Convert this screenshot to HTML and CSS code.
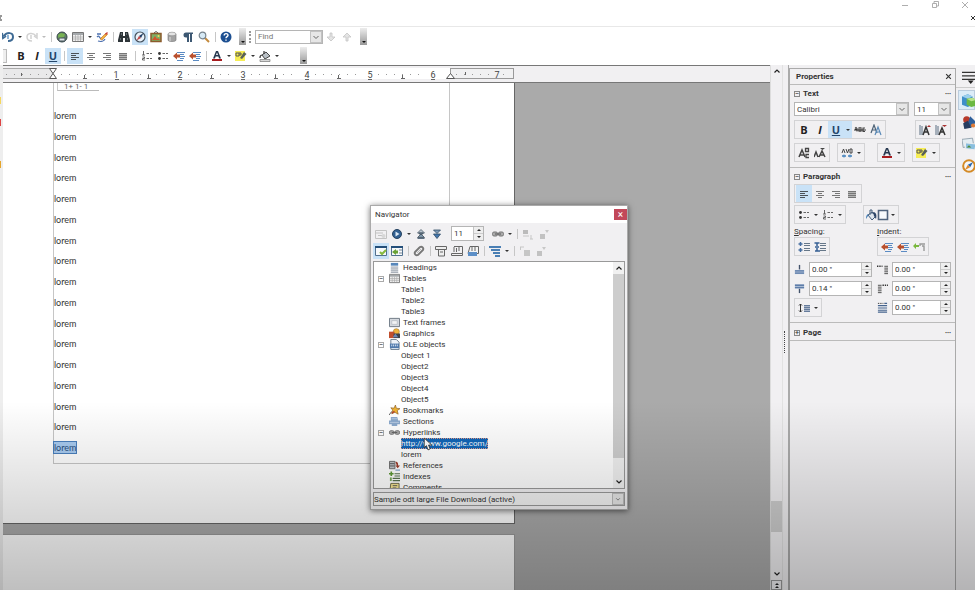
FILE: index.html
```html
<!DOCTYPE html>
<html lang="en">
<head>
<meta charset="utf-8">
<title>Writer</title>
<link rel="stylesheet" href="styles.css">
</head>
<body>
<svg class="defs" aria-hidden="true">
  <symbol id="undo" viewBox="0 0 12 12"><path d="M0 2l1 5 3-2M2 5c3-4 9-4 9 1 0 3-2 4-5 4" fill="none" stroke="#3e6a94" stroke-width="2"/><path d="M6 4v4" stroke="#8fb4d6" stroke-width="2"/></symbol>
  <symbol id="redo" viewBox="0 0 12 12"><path d="M11 2v5L8 5M10 5C7 1 1 2 1 6c0 3 2 4 5 4M5 4v4" fill="none" stroke="#d2d2d2" stroke-width="1.500"/></symbol>
  <symbol id="globe" viewBox="0 0 12 12"><circle cx="6" cy="6" r="5" fill="#5f7f66" stroke="#38464c"/><path d="M2 4l3-2 4 1-1 3-3 1-2 2z" fill="#79b354"/><path d="M3 7h6v3H3z" fill="#dfe5e8" stroke="#46555c"/></symbol>
  <symbol id="table" viewBox="0 0 12 12"><path d="M.5 1.500h11v9H.5z" fill="#eee" stroke="#777"/><path d="M1 2h10v2H1z" fill="#a5a9ac"/><path d="M3.500 4v6M6 4v6M8.500 4v6M1 6h10M1 8h10" stroke="#a9a9a9" stroke-width=".7"/></symbol>
  <symbol id="pen" viewBox="0 0 12 12"><path d="M1 3h4M1 6c3-3 2 3 5 1M2 10c3 1 6 0 7-2" fill="none" stroke="#4e72b1" stroke-width="1.300"/><path d="M4 8l6-6 1.500 1.500L6 9z" fill="#f3b23f" stroke="#b8702b" stroke-width=".6"/><path d="M9 3l2-2 1 1-2 2z" fill="#c73b3b"/></symbol>
  <symbol id="binoc" viewBox="0 0 12 12"><path d="M2 1h3v4h2V1h3l2 8v2H7V7H5v4H0V9z" fill="#2d3438"/><path d="M2 8h1M9 8h1M3 3h1M8 3h1" stroke="#98a2a8"/></symbol>
  <symbol id="compass" viewBox="0 0 12 12"><circle cx="6" cy="6" r="5" fill="#e9f2fa" stroke="#45525e" stroke-width="1.200"/><path d="M9.500 2L7 7 5 5z" fill="#1d3d66"/><path d="M2.500 9.500L5 5l2 2z" fill="#c14343"/></symbol>
  <symbol id="gallery" viewBox="0 0 12 12"><path d="M4 2l2-1.500L8 2" fill="none" stroke="#555"/><path d="M1 2.500h10v8H1z" fill="#7fae65" stroke="#8c5b2c" stroke-width="1.500"/><path d="M2 9l3-4 2 3 1-1 2 2z" fill="#d4542d"/><circle cx="8.500" cy="5" r="1" fill="#f5dc5c"/></symbol>
  <symbol id="db" viewBox="0 0 12 12"><path d="M2 3v6c0 2 8 2 8 0V3z" fill="#a3a3a3" stroke="#707070" stroke-width=".6"/><ellipse cx="6" cy="3" rx="4" ry="1.800" fill="#e4e4e4" stroke="#888" stroke-width=".6"/><path d="M4 6v4" stroke="#ddd"/></symbol>
  <symbol id="pilcrow" viewBox="0 0 12 12"><path d="M11 1.500H4a2.500 2.500 0 000 5h1V11h2V3h1v8h2V3h1z" fill="#3d5873"/></symbol>
  <symbol id="lens" viewBox="0 0 12 12"><path d="M7 7l4 4" stroke="#c48a3c" stroke-width="2"/><circle cx="4.500" cy="4.500" r="3.300" fill="#d6e9f5" stroke="#77838d" stroke-width="1.200"/></symbol>
  <symbol id="help" viewBox="0 0 12 12"><circle cx="6" cy="6" r="5.500" fill="#1c4f91"/><path d="M4.200 4.500c0-2.500 3.800-2.500 3.800-.3C8 5.500 6 5.700 6 7.200M6 8.500v1.300" fill="none" stroke="#fff" stroke-width="1.400"/></symbol>
  <symbol id="down" viewBox="0 0 12 12"><path d="M5 2h2v4h3l-4 4-4-4h3z" fill="#e4e4e4" stroke="#c4c4c4" stroke-width=".8"/></symbol>
  <symbol id="up" viewBox="0 0 12 12"><path d="M5 10h2V6h3L6 2 2 6h3z" fill="#e4e4e4" stroke="#c4c4c4" stroke-width=".8"/></symbol>
  <symbol id="left" viewBox="0 0 12 12"><path d="M2 3.500h8M2 5.500h5M2 7.500h8M2 9.500h5" stroke="#4c5258"/></symbol>
  <symbol id="center" viewBox="0 0 12 12"><path d="M2 3.500h8M4 5.500h4M2 7.500h8M4 9.500h4" stroke="#777"/></symbol>
  <symbol id="right" viewBox="0 0 12 12"><path d="M2 3.500h8M5 5.500h5M2 7.500h8M5 9.500h5" stroke="#777"/></symbol>
  <symbol id="just" viewBox="0 0 12 12"><path d="M2 3h8v7H2z" fill="#b5b5b5"/><path d="M2 3.500h8M2 5.500h8M2 7.500h8M2 9.500h8" stroke="#777"/></symbol>
  <symbol id="numlist" viewBox="0 0 12 12"><path d="M2.500 1v4M1 5h3M1.500 7h2v1.500h-2V10h2.500" fill="none" stroke="#555" stroke-width=".9"/><path d="M5.500 3.500H8M9 3.500h2M5.500 8.500H8M9 8.500h2" stroke="#666"/></symbol>
  <symbol id="bullist" viewBox="0 0 12 12"><circle cx="2.500" cy="3.500" r="1.400" fill="#333"/><circle cx="2.500" cy="8.500" r="1.400" fill="#333"/><path d="M5.500 3.500H8M9 3.500h2M5.500 8.500H8M9 8.500h2" stroke="#666"/></symbol>
  <symbol id="indent" viewBox="0 0 12 12"><path d="M4 2.500h8M7 4.500h4M7 6.500h5M7 8.500h4M4 10.500h6" stroke="#5b8bc3"/><path d="M0 6l4-3.500v2h3v3H4v2z" fill="#b9502e"/></symbol>
  <symbol id="before" viewBox="0 0 12 12"><path d="M12 3H7v2M9 5h2v5" fill="none" stroke="#999" stroke-width="1.400"/><path d="M0 5l3-3v2h3v2H3v2z" fill="#7ab83e"/></symbol>
  <symbol id="fontcol" viewBox="0 0 12 12"><path d="M2 8.500L5 1h2l3 7.500H8L7.400 6.500H4.600L4 8.500zM5 5h2L6 2.500z" fill="#27384f"/><path d="M1 9h10v2H1z" fill="#a81c20"/></symbol>
  <symbol id="hilite" viewBox="0 0 12 12"><path d="M0 1h10v10H0z" fill="#f6ed55"/><path d="M1 3h3v3H1zM5 2v4M5 4h2" fill="none" stroke="#555"/><path d="M5 8l4-6 2.500 2L7 9z" fill="#59615a"/></symbol>
  <symbol id="bucket" viewBox="0 0 12 12"><path d="M3 5l4-3 4 4-5 3z" fill="#b9c0c6" stroke="#444"/><path d="M5 4V1M3 5C1 5 1 7 1 8" fill="none" stroke="#333" stroke-width="1.200"/><path d="M1 9.500h10v2H1z" fill="#d8d8d8" stroke="#777" stroke-width=".7"/></symbol>
  <symbol id="fill" viewBox="0 0 12 12"><path d="M3 6l4-3 4 4-4 4z" fill="#dfe6ee" stroke="#445e7d"/><path d="M5 6V1h2v4" fill="none" stroke="#445e7d"/><path d="M8 3c3 0 4 3 3 7L9 7z" fill="#2e4668"/><path d="M3 5C1 6 1 8 1 10l2-3z" fill="#4a80b7"/></symbol>
  <symbol id="strike" viewBox="0 0 12 12"><path d="M1 4.500l1-1 1 1v3M1 5.500h2M5 3.800v3.500h2V3.800zM11 4H9v3.500h2" fill="none" stroke="#444" stroke-width="1.100"/><path d="M0 6h12" stroke="#222" stroke-width=".9"/></symbol>
  <symbol id="shadow" viewBox="0 0 12 12"><path d="M1 9l3-8 3 8M2 6h4" fill="none" stroke="#4d6276" stroke-width="1.200"/><path d="M5 11l3-8 3 8M6 8h4" fill="none" stroke="#5b8bb9" stroke-width="1.200"/></symbol>
  <symbol id="grow" viewBox="0 0 12 12"><path d="M1 1v10M3 2v9" stroke="#5a6f82"/><path d="M4 11l3-8 3 8M5 8h4" fill="none" stroke="#333" stroke-width="1.500"/><path d="M8 3l2-2 2 2z" fill="#a93232"/></symbol>
  <symbol id="shrink" viewBox="0 0 12 12"><path d="M1 1v10M3 2v9" stroke="#5a6f82"/><path d="M4 11l3-7 3 7M5 8h4" fill="none" stroke="#333" stroke-width="1.500"/><path d="M7 1h5l-2.500 2z" fill="#a93232"/></symbol>
  <symbol id="super" viewBox="0 0 12 12"><path d="M1 10l3-7 3 7M2 8h4" fill="none" stroke="#444" stroke-width="1.500"/><path d="M7.500 1.500h3v3h-3zM11 7.500H8v3h3" fill="none" stroke="#444" stroke-width="1.300"/></symbol>
  <symbol id="sub" viewBox="0 0 12 12"><path d="M0 10l2-5 2 5M5 10l3-6 3 6M6 8h4" fill="none" stroke="#444" stroke-width="1.500"/><path d="M6 1h5L8.500 3z" fill="#444"/></symbol>
  <symbol id="charsp" viewBox="0 0 12 12"><path d="M1 6l1.500-4L4 6M5 2l1.500 4L8 2M9 2v4h2V2z" fill="none" stroke="#444"/><path d="M1 9h4M7 9h4" stroke="#4683bd" stroke-width="1.500"/><path d="M3 7.500v3M9 7.500v3" stroke="#4683bd"/></symbol>
  <symbol id="frame" viewBox="0 0 12 12"><path d="M1.500 1.500h9v9h-9z" fill="#f8fafd" stroke="#51647e" stroke-width="1.600"/></symbol>
  <symbol id="parainc" viewBox="0 0 12 12"><path d="M2.500 1v4M.5 3h4M2.500 7v4M.5 9h4" stroke="#456da0" stroke-width="1.500"/><path d="M6 2.500h6M6 4.500h6M6 7.500h6M6 9.500h6" stroke="#667789"/></symbol>
  <symbol id="paradec" viewBox="0 0 12 12"><path d="M.5 2h5M3 2v3M1 10h5M3 10V7M1 6h4" stroke="#365f94" stroke-width="1.500"/><path d="M6 2.500h6M6 4.500h6M6 7.500h6M6 9.500h6" stroke="#667789"/></symbol>
  <symbol id="above" viewBox="0 0 12 12"><path d="M6 1v5" stroke="#44536b" stroke-width="1.500"/><path d="M1 6.500h10v4.500H1z" fill="#a9bbd4"/><path d="M1 7.500h10M1 10h10" stroke="#5e7da9" stroke-width="1.500"/></symbol>
  <symbol id="below" viewBox="0 0 12 12"><path d="M6 6v5" stroke="#44536b" stroke-width="1.500"/><path d="M1 1.500h10V6H1z" fill="#a9bbd4"/><path d="M1 2.500h10M1 5h10" stroke="#5e7da9" stroke-width="1.500"/></symbol>
  <symbol id="ibefore" viewBox="0 0 12 12"><path d="M0 2.500h6" stroke="#333" stroke-width="1.500" stroke-dasharray="1.500 1"/><path d="M8 2.500h4M8 4.500h4M8 6.500h4M8 8.500h4M8 10.500h4" stroke="#444"/></symbol>
  <symbol id="iafter" viewBox="0 0 12 12"><path d="M6 2.500h6" stroke="#333" stroke-width="1.500" stroke-dasharray="1.500 1"/><path d="M1 2.500h4M1 4.500h4M1 6.500h4M1 8.500h4M1 10.500h4" stroke="#444"/></symbol>
  <symbol id="ifirst" viewBox="0 0 12 12"><path d="M1 1.500h6" stroke="#333" stroke-dasharray="1.500 1"/><path d="M8 1.500h3M1 4h10M1 6.500h10M1 9h10M1 11h10" stroke="#46648e" stroke-width="1.200"/></symbol>
  <symbol id="linesp" viewBox="0 0 12 12"><path d="M2.500 2v8M1 3.500L2.500 2 4 3.500M1 8.500L2.500 10 4 8.500" fill="none" stroke="#333"/><path d="M6 3h6v7H6z" fill="#a9b5c8"/><path d="M6 3.500h6M6 5.500h6M6 7.500h6M6 9.500h6" stroke="#667c9c"/></symbol>
  <symbol id="toggle" viewBox="0 0 12 12"><path d="M.5 2.500h11v8H.5zM1 5h7M3 7.500h5" fill="none" stroke="#c3c3c3"/><circle cx="8.500" cy="8" r="2" fill="#d7d7d7"/></symbol>
  <symbol id="navig" viewBox="0 0 12 12"><circle cx="6" cy="6" r="4.500" fill="#315f91" stroke="#26425f"/><path d="M4.500 3.500L8.500 6l-4 2.500z" fill="#dce9f4"/></symbol>
  <symbol id="prev" viewBox="0 0 12 12"><path d="M2.500 5L6 1.500 9.500 5z" fill="#b9c5cf" stroke="#4d5c69" stroke-width=".8"/><path d="M4 5h4v1H4zM2.500 9.500L6 6l3.500 3.500z" fill="#7e96aa" stroke="#3f4e5c" stroke-width=".8"/><path d="M2.500 10.500h7" stroke="#5b6d80"/></symbol>
  <symbol id="next" viewBox="0 0 12 12"><path d="M2.500 2h7L6 5.500z" fill="#7e9bb8" stroke="#2e4963" stroke-width=".8"/><path d="M2.500 6h7L6 10.500z" fill="#4377ad" stroke="#2e4963" stroke-width=".8"/></symbol>
  <symbol id="chain" viewBox="0 0 12 12"><rect x=".5" y="4" width="5" height="4" rx="1.500" fill="#aaa" stroke="#777"/><rect x="6.500" y="4" width="5" height="4" rx="1.500" fill="#aaa" stroke="#777"/><path d="M3 6h6" stroke="#666" stroke-width="1.200"/></symbol>
  <symbol id="promote" viewBox="0 0 12 12"><path d="M1 2h5v4H1z" fill="#bbb"/><path d="M1 8h6M9 11V7M8 11h3" stroke="#c6c6c6"/></symbol>
  <symbol id="demote" viewBox="0 0 12 12"><path d="M2 6h5v5H2z" fill="#c2c2c2"/><path d="M7 2h4L9 5z" fill="#c8c8c8"/></symbol>
  <symbol id="level" viewBox="0 0 12 12"><path d="M5 5h6v6H5z" fill="#c6c6c6"/><path d="M1 2h4M1.500 2v3" stroke="#c6c6c6"/></symbol>
  <symbol id="listbox" viewBox="0 0 12 12"><path d="M.5 1.500h11v9H.5z" fill="#f7f9fb" stroke="#52718f"/><path d="M0 1h12v2H0z" fill="#244f7a"/><path d="M5 7l2 2 4-4" fill="none" stroke="#85b93d" stroke-width="2"/></symbol>
  <symbol id="content" viewBox="0 0 12 12"><path d="M.5 1.500h11v9H.5z" fill="#f7f9fb" stroke="#52718f"/><path d="M0 1h12v2H0z" fill="#244f7a"/><path d="M8 5h3M8 8h3" stroke="#7b8795"/><path d="M1 7l4-3v1.500h2v3H5V10z" fill="#6aa236"/></symbol>
  <symbol id="clip" viewBox="0 0 12 12"><path d="M2 7l5-5c2-1 4 1 3 3L5 10c-2 1-4-1-3-3l4-4" fill="none" stroke="#777" stroke-width="1.900"/><path d="M4 8l4-4" stroke="#bbb"/></symbol>
  <symbol id="header" viewBox="0 0 12 12"><path d="M.5 1.500h11v3H.5zM3.500 5v6h6V5M5 7h3" fill="#eee" stroke="#666"/></symbol>
  <symbol id="footer" viewBox="0 0 12 12"><path d="M3 1.500h8.500v7M.5 8.500h11v2H.5zM3 2v5M5.500 7V3M8 2v4" fill="none" stroke="#666"/></symbol>
  <symbol id="anchor" viewBox="0 0 12 12"><path d="M3 1.500h8.500v7H1zM5 2v4M8 2v4" fill="#f4f4f4" stroke="#666"/><path d="M1 7h9v4H1z" fill="#5d8fc7"/></symbol>
  <symbol id="outline" viewBox="0 0 12 12"><path d="M0 2h12M2 5h9M4 8h7M6 11h5" stroke="#4a7fb4" stroke-width="1.800"/></symbol>
  <symbol id="head" viewBox="0 0 12 12"><path d="M2 1h8v3H2z" fill="#5787bb"/><path d="M2 5h8v7H2z" fill="#d9dce1"/><path d="M2 5.500h8M2 7.500h8M2 9.500h8M2 11.500h8" stroke="#a3abb5"/></symbol>
  <symbol id="tframe" viewBox="0 0 12 12"><path d="M.5 1.500h11v9H.5z" fill="#d5d9df" stroke="#68737f"/><path d="M3 4h6v4H3z" fill="#f2f3f5" stroke="#a6adb6" stroke-width=".6"/></symbol>
  <symbol id="graphics" viewBox="0 0 12 12"><circle cx="8" cy="4" r="3.300" fill="#f0b43d" stroke="#9a6f1f" stroke-width=".6"/><path d="M0 4h6v7H0z" fill="#c04e2d"/><path d="M5 6h7v5H5z" fill="#3d4148"/><path d="M4 10l3-4 3 4z" fill="#6b86b4"/></symbol>
  <symbol id="ole" viewBox="0 0 12 12"><path d="M2 .5h6l3 3v8H2z" fill="#eef3f8" stroke="#66788a"/><path d="M1 5h10v5H1z" fill="#4f79ab"/><path d="M3 8V6M5 8V6M7 8V6M9 8V6" stroke="#dce8f5"/></symbol>
  <symbol id="bookmark" viewBox="0 0 12 12"><path d="M0 11l3-4" stroke="#555"/><path d="M7 0l1 3.500 4 .5-3 2 1 4-3.500-2L3 9.500l1-4L2 3l3.500.5z" fill="#eeb231" stroke="#8b5b1f" stroke-width=".7"/><path d="M3 9l3-2" stroke="#b5412c" stroke-width="1.500"/></symbol>
  <symbol id="sections" viewBox="0 0 12 12"><path d="M2 1h7l1 4h2v4H9v2H3V9H0V5h2z" fill="#8ba9cc"/><path d="M3 3h6M1 7h10" stroke="#bccde2"/></symbol>
  <symbol id="refs" viewBox="0 0 12 12"><path d="M.5 1.500h6v8h-6z" fill="#bfc3c8" stroke="#666"/><path d="M1 4h5M1 6.500h5" stroke="#555"/><path d="M7 2c3 0 3 2 3 4h2L9.500 9 7 6h1.500" fill="#9c3b2a"/><path d="M7 11h5" stroke="#5787bb"/></symbol>
  <symbol id="indexes" viewBox="0 0 12 12"><path d="M0 3h5M2.500.5v5" stroke="#5c9734" stroke-width="1.800"/><path d="M6 3h6M6 5.500h6M4 8h8M4 10.500h8" stroke="#57714e" stroke-width="1.200"/><path d="M1 7h2v4H1z" fill="#7aa95b"/></symbol>
  <symbol id="comments" viewBox="0 0 12 12"><path d="M2 1.500h9v8H1z" fill="#f4e492" stroke="#64613f"/><path d="M4 4h5M4 6.500h4" stroke="#555"/></symbol>
  <symbol id="menu" viewBox="0 0 12 12"><path d="M0 2h12M0 5h12M0 8h12" stroke="#333" stroke-width="1.100"/><path d="M5 9h5L7.500 12z" fill="#222"/></symbol>
  <symbol id="cube" viewBox="0 0 12 12"><path d="M0 3l5-2 4 2v7l-4 2-5-2z" fill="#3f8fc9"/><path d="M0 3l5-2 4 2-4 2z" fill="#9bd0ee"/><path d="M4 5l5-1 3 2v5l-4 1-4-2z" fill="#6cb943"/><path d="M4 5l5-1 3 2-4 1z" fill="#b9e48c"/></symbol>
  <symbol id="shapes" viewBox="0 0 12 12"><circle cx="4" cy="4" r="3" fill="#b73a2b"/><path d="M7 1l5 5-4 5-3-4z" fill="#2d5f9b"/><path d="M1 7l4-2 3 6-6 1z" fill="#263c60"/><circle cx="9.500" cy="9" r="1.800" fill="#df7c37"/></symbol>
  <symbol id="photos" viewBox="0 0 12 12"><path d="M0 2l9-1 1 6-9 2z" fill="#e4edf2" stroke="#8899a5" stroke-width=".7"/><path d="M3 5l9 1-1 5-8-1z" fill="#8bbfdf" stroke="#eee" stroke-width=".8"/><path d="M4 9l2-2 2 2z" fill="#4e8d36"/></symbol>
  <symbol id="safari" viewBox="0 0 12 12"><circle cx="6" cy="6" r="5" fill="#f5f7fa" stroke="#d48a26" stroke-width="1.700"/><path d="M9.500 2.500L7 7 5 5z" fill="#2b67ac"/><path d="M2.500 9.500L5 5l2 2z" fill="#e28a2a"/></symbol>
</svg>

<div class="app">
  <header class="titlebar">
    <div class="wincontrols">
      <button class="win" aria-label="Minimize"><svg viewBox="0 0 8 8"><path d="M1 4.500h6"/></svg></button>
      <button class="win" aria-label="Restore"><svg viewBox="0 0 8 8"><path d="M1.500 2.500h4v4h-4zM3 2V.5h4.500V5H6"/></svg></button>
      <button class="win" aria-label="Close"><svg viewBox="0 0 8 8"><path d="M1 1l6 6M7 1L1 7"/></svg></button>
    </div>
    <div class="docclose"><svg viewBox="0 0 2 6"><path d="M0 1h2M0 3h1M0 5h2"/></svg><button aria-label="Close document"><svg class="cross" viewBox="0 0 4 6"><path d="M0 1l4 4M4 1L0 5"/></svg></button></div>
  </header>

  <div class="toolbar">
    <button class="b" aria-label="Undo"><svg><use href="#undo"/></svg></button><button class="dd" aria-label="Undo list"></button>
    <button class="b" aria-label="Redo"><svg><use href="#redo"/></svg></button><button class="dd faint" aria-label="Redo list"></button>
    <i class="sep"></i>
    <button class="b" aria-label="Hyperlink"><svg><use href="#globe"/></svg></button>
    <button class="b" aria-label="Table"><svg><use href="#table"/></svg></button><button class="dd" aria-label="Table size"></button>
    <button class="b" aria-label="Draw functions"><svg><use href="#pen"/></svg></button>
    <i class="sep"></i>
    <button class="b" aria-label="Find and replace"><svg><use href="#binoc"/></svg></button>
    <button class="b on" aria-label="Navigator"><svg><use href="#compass"/></svg></button>
    <button class="b" aria-label="Gallery"><svg><use href="#gallery"/></svg></button>
    <button class="b" aria-label="Data sources"><svg><use href="#db"/></svg></button>
    <button class="b" aria-label="Nonprinting characters"><svg><use href="#pilcrow"/></svg></button>
    <button class="b" aria-label="Zoom"><svg><use href="#lens"/></svg></button>
    <i class="sep"></i>
    <button class="b" aria-label="Help"><svg><use href="#help"/></svg></button>
    <button class="more" aria-label="More standard tools"></button>
    <i class="grip"></i>
    <span class="combo find"><input type="text" placeholder="Find" aria-label="Find"><button aria-label="Find history"><svg viewBox="0 0 8 8"><path d="M1.500 3L4 5.500 6.500 3"/></svg></button></span>
    <button class="b" aria-label="Find next"><svg><use href="#down"/></svg></button>
    <button class="b" aria-label="Find previous"><svg><use href="#up"/></svg></button>
    <button class="more" aria-label="More find tools"></button>
  </div>
  <div class="toolbar format">
    <i class="edge"></i>
    <button class="b bold">B</button><button class="b ital">I</button><button class="b under on">U</button>
    <i class="sep"></i>
    <button class="b on" aria-label="Align left"><svg><use href="#left"/></svg></button>
    <button class="b" aria-label="Center"><svg><use href="#center"/></svg></button>
    <button class="b" aria-label="Align right"><svg><use href="#right"/></svg></button>
    <button class="b" aria-label="Justify"><svg><use href="#just"/></svg></button>
    <i class="sep wide"></i>
    <button class="b" aria-label="Numbering"><svg><use href="#numlist"/></svg></button>
    <button class="b" aria-label="Bullets"><svg><use href="#bullist"/></svg></button>
    <button class="b" aria-label="Decrease indent"><svg><use href="#indent"/></svg></button>
    <button class="b" aria-label="Increase indent"><svg><use href="#indent"/></svg></button>
    <i class="sep"></i>
    <button class="b" aria-label="Font color"><svg><use href="#fontcol"/></svg></button><button class="dd" aria-label="Font colors"></button>
    <button class="b" aria-label="Highlighting"><svg><use href="#hilite"/></svg></button><button class="dd" aria-label="Highlight colors"></button>
    <button class="b" aria-label="Background color"><svg><use href="#bucket"/></svg></button><button class="dd" aria-label="Background colors"></button>
    <button class="more far" aria-label="More formatting tools"></button>
  </div>

  <main class="work">
    <div class="sliver"><i class="y"></i><i class="r"></i><i class="o"></i></div>
    <section class="editor">
      <div class="ruler">
        <svg width="512" height="16" viewBox="3 66 512 16">
          <rect x="2.500" y="68.500" width="51" height="10" fill="#e9e9ea" stroke="#aaa"/>
          <rect x="53" y="68" width="397" height="11" fill="#fff"/>
          <rect x="450.500" y="68.500" width="63" height="10" fill="#f1f1f2" stroke="#999"/>
          <path d="M6 74.500h46M61 74.500h48M124 74.500h48M188 74.500h48M251 74.500h48M315 74.500h48M378 74.500h48M456 74.500h35M503 74.500h8" stroke="#999" stroke-dasharray="1 7"/>
          <path d="M84.500 75v3M148.500 75v3M211.500 75v3M275.500 75v3M338.500 75v3M402.500 75v3M83 78.500h4M147 78.500h4M210 78.500h4M274 78.500h4M337 78.500h4M401 78.500h4M115 79.500h4M178 79.500h4M241 79.500h4M305 79.500h4M368 79.500h4M431 79.500h4M21.500 73v3M465.500 72v3" stroke="#666"/>
          <g class="nums"><text x="116" y="78">1</text><text x="180" y="78">2</text><text x="243" y="78">3</text><text x="307" y="78">4</text><text x="370" y="78">5</text><text x="433" y="78">6</text><text x="497" y="78">7</text></g>
          <path d="M49.500 68.500h7l-3.500 5zM53 73.500l3.500 5h-7zM450.500 73.500l4 5h-8z" fill="#fff" stroke="#555"/>
        </svg>
      </div>
      <div class="canvas">
        <article class="page first">
          <div class="frames">1+ 1- 1</div>
          <div class="body">
            <p>lorem</p><p>lorem</p><p>lorem</p><p>lorem</p><p>lorem</p><p>lorem</p><p>lorem</p><p>lorem</p><p>lorem</p><p>lorem</p><p>lorem</p><p>lorem</p><p>lorem</p><p>lorem</p><p>lorem</p><p>lorem</p><p><mark>lorem</mark></p>
          </div>
        </article>
        <article class="page second"></article>
      </div>
    </section>
    <div class="vscroll">
      <button aria-label="Scroll up"><svg viewBox="0 0 8 8"><path d="M1.500 5.500L4 3l2.500 2.500"/></svg></button>
      <i class="track"><i class="thumb"></i></i>
      <button aria-label="Scroll down"><svg viewBox="0 0 8 8"><path d="M1.500 2.500L4 5l2.500-2.500"/></svg></button>
      <button class="pg" aria-label="Previous page"><svg viewBox="0 0 8 8"><path d="M2 4l2-2 2 2zM2 7l2-2 2 2z"/></svg></button>
    </div>
    <div class="splitter"><i></i></div>
    <aside class="side">
      <div class="phead"><h2>Properties</h2><button aria-label="Close sidebar"><svg class="cross" viewBox="0 0 6 6"><path d="M1 1l4 4M5 1L1 5"/></svg></button></div>
      <section>
        <div class="shead"><button class="exp" aria-label="Collapse Text">−</button><h3>Text</h3><button class="dots" aria-label="Text options">•••</button></div>
        <div class="row">
          <span class="combo font"><input type="text" value="Calibri" aria-label="Font name"><button aria-label="Font list"><svg viewBox="0 0 8 8"><path d="M1.500 3L4 5.500 6.500 3"/></svg></button></span>
          <span class="combo size"><input type="text" value="11" aria-label="Font size"><button aria-label="Size list"><svg viewBox="0 0 8 8"><path d="M1.500 3L4 5.500 6.500 3"/></svg></button></span>
        </div>
        <div class="row">
          <span class="grp"><button class="b bold">B</button><button class="b ital">I</button><button class="b under on">U</button><button class="dd on" aria-label="Underline styles"></button><button class="b" aria-label="Strikethrough"><svg><use href="#strike"/></svg></button><button class="b" aria-label="Shadow"><svg><use href="#shadow"/></svg></button></span>
          <span class="grp end"><button class="b" aria-label="Increase font"><svg><use href="#grow"/></svg></button><button class="b" aria-label="Decrease font"><svg><use href="#shrink"/></svg></button></span>
        </div>
        <div class="row spread">
          <span class="grp"><button class="b" aria-label="Superscript"><svg><use href="#super"/></svg></button><button class="b" aria-label="Subscript"><svg><use href="#sub"/></svg></button></span>
          <span class="grp"><button class="b" aria-label="Character spacing"><svg><use href="#charsp"/></svg></button><button class="dd" aria-label="Spacing list"></button></span>
          <span class="grp push"><button class="b" aria-label="Font color"><svg><use href="#fontcol"/></svg></button><button class="dd" aria-label="Font colors"></button></span>
          <span class="grp"><button class="b" aria-label="Highlighting"><svg><use href="#hilite"/></svg></button><button class="dd" aria-label="Highlight colors"></button></span>
        </div>
      </section>
      <section>
        <div class="shead"><button class="exp" aria-label="Collapse Paragraph">−</button><h3>Paragraph</h3><button class="dots" aria-label="Paragraph options">•••</button></div>
        <div class="row tight"><span class="grp"><button class="b on" aria-label="Left"><svg><use href="#left"/></svg></button><button class="b" aria-label="Center"><svg><use href="#center"/></svg></button><button class="b" aria-label="Right"><svg><use href="#right"/></svg></button><button class="b" aria-label="Justified"><svg><use href="#just"/></svg></button></span></div>
        <div class="row tight">
          <span class="grp"><button class="b" aria-label="Bullets"><svg><use href="#bullist"/></svg></button><button class="dd" aria-label="Bullet styles"></button><button class="b" aria-label="Numbering"><svg><use href="#numlist"/></svg></button><button class="dd" aria-label="Number styles"></button></span>
          <span class="grp bg"><button class="b pair" aria-label="Paragraph background"><svg><use href="#fill"/></svg><svg><use href="#frame"/></svg></button><button class="dd" aria-label="Backgrounds"></button></span>
        </div>
        <div class="cols">
          <div>
            <h4><u>S</u>pacing:</h4>
            <div class="row tight"><span class="grp"><button class="b" aria-label="Increase spacing"><svg><use href="#parainc"/></svg></button><button class="b" aria-label="Decrease spacing"><svg><use href="#paradec"/></svg></button></span></div>
            <div class="field"><label for="f1" aria-label="Above paragraph"><svg><use href="#above"/></svg></label><span class="spin"><input id="f1" value='0.00 "'><span><button aria-label="More"></button><button aria-label="Less"></button></span></span></div>
            <div class="field"><label for="f2" aria-label="Below paragraph"><svg><use href="#below"/></svg></label><span class="spin"><input id="f2" value='0.14 "'><span><button aria-label="More"></button><button aria-label="Less"></button></span></span></div>
            <span class="grp"><button class="b" aria-label="Line spacing"><svg><use href="#linesp"/></svg></button><button class="dd" aria-label="Line spacings"></button></span>
          </div>
          <div>
            <h4><u>I</u>ndent:</h4>
            <div class="row tight"><span class="grp"><button class="b" aria-label="Increase indent"><svg><use href="#indent"/></svg></button><button class="b" aria-label="Decrease indent"><svg><use href="#indent"/></svg></button><button class="b" aria-label="Hanging indent"><svg><use href="#before"/></svg></button></span></div>
            <div class="field"><label for="f3" aria-label="Before text"><svg><use href="#ibefore"/></svg></label><span class="spin"><input id="f3" value='0.00 "'><span><button aria-label="More"></button><button aria-label="Less"></button></span></span></div>
            <div class="field"><label for="f4" aria-label="After text"><svg><use href="#iafter"/></svg></label><span class="spin"><input id="f4" value='0.00 "'><span><button aria-label="More"></button><button aria-label="Less"></button></span></span></div>
            <div class="field"><label for="f5" aria-label="First line"><svg><use href="#ifirst"/></svg></label><span class="spin"><input id="f5" value='0.00 "'><span><button aria-label="More"></button><button aria-label="Less"></button></span></span></div>
          </div>
        </div>
      </section>
      <section>
        <div class="shead"><button class="exp" aria-label="Expand Page">+</button><h3>Page</h3><button class="dots" aria-label="Page options">•••</button></div>
      </section>
    </aside>
    <nav class="tabs">
      <button aria-label="Sidebar settings"><svg><use href="#menu"/></svg></button>
      <button class="sel" aria-label="Properties"><svg><use href="#cube"/></svg></button>
      <button aria-label="Styles"><svg><use href="#shapes"/></svg></button>
      <button aria-label="Gallery"><svg><use href="#photos"/></svg></button>
      <button aria-label="Navigator"><svg><use href="#safari"/></svg></button>
    </nav>
  </main>

  <div class="navigator" role="dialog" aria-labelledby="navtitle">
    <div class="nhead"><h2 id="navtitle">Navigator</h2><button aria-label="Close">×</button></div>
    <div class="ntools">
      <button class="b" aria-label="Toggle"><svg><use href="#toggle"/></svg></button>
      <button class="b" aria-label="Navigation"><svg><use href="#navig"/></svg></button><button class="dd" aria-label="Navigation list"></button>
      <button class="b" aria-label="Previous"><svg><use href="#prev"/></svg></button>
      <button class="b" aria-label="Next"><svg><use href="#next"/></svg></button>
      <span class="spin pageno"><input value="11" aria-label="Page number"><span><button aria-label="More"></button><button aria-label="Less"></button></span></span>
      <button class="b" aria-label="Drag mode"><svg><use href="#chain"/></svg></button><button class="dd" aria-label="Drag modes"></button>
      <i class="sep"></i>
      <button class="b" aria-label="Promote chapter"><svg><use href="#promote"/></svg></button>
      <button class="b" aria-label="Demote chapter"><svg><use href="#demote"/></svg></button>
    </div>
    <div class="ntools">
      <button class="b on" aria-label="List box"><svg><use href="#listbox"/></svg></button>
      <button class="b" aria-label="Content view"><svg><use href="#content"/></svg></button>
      <i class="sep"></i>
      <button class="b" aria-label="Set reminder"><svg><use href="#clip"/></svg></button>
      <i class="sep"></i>
      <button class="b" aria-label="Header"><svg><use href="#header"/></svg></button>
      <button class="b" aria-label="Footer"><svg><use href="#footer"/></svg></button>
      <button class="b" aria-label="Anchor"><svg><use href="#anchor"/></svg></button>
      <i class="sep"></i>
      <button class="b" aria-label="Heading levels"><svg><use href="#outline"/></svg></button><button class="dd" aria-label="Levels"></button>
      <i class="sep"></i>
      <button class="b" aria-label="Promote level"><svg><use href="#level"/></svg></button>
      <button class="b" aria-label="Demote level"><svg><use href="#demote"/></svg></button>
    </div>
    <div class="treebox">
      <ul class="tree">
        <li><span class="node"><svg><use href="#head"/></svg>Headings</span></li>
        <li><span class="node"><button class="exp" aria-label="Collapse Tables">−</button><svg><use href="#table"/></svg>Tables</span>
          <ul><li>Table1</li><li>Table2</li><li>Table3</li></ul></li>
        <li><span class="node"><svg><use href="#tframe"/></svg>Text frames</span></li>
        <li><span class="node"><svg><use href="#graphics"/></svg>Graphics</span></li>
        <li><span class="node"><button class="exp" aria-label="Collapse OLE objects">−</button><svg><use href="#ole"/></svg>OLE objects</span>
          <ul><li>Object 1</li><li>Object2</li><li>Object3</li><li>Object4</li><li>Object5</li></ul></li>
        <li><span class="node"><svg><use href="#bookmark"/></svg>Bookmarks</span></li>
        <li><span class="node"><svg><use href="#sections"/></svg>Sections</span></li>
        <li><span class="node"><button class="exp" aria-label="Collapse Hyperlinks">−</button><svg><use href="#chain"/></svg>Hyperlinks</span>
          <ul><li><a class="picked" href="#hyperlink">http://www.google.com/<svg class="cursor" viewBox="0 0 9 13"><path d="M1 1v9l2-2 1.500 4 2-1L5 7.500h3z" fill="#fff" stroke="#333" stroke-width=".8"/></svg></a></li><li>lorem</li></ul></li>
        <li><span class="node"><svg><use href="#refs"/></svg>References</span></li>
        <li><span class="node"><svg><use href="#indexes"/></svg>Indexes</span></li>
        <li><span class="node"><svg><use href="#comments"/></svg>Comments</span></li>
      </ul>
      <div class="tscroll">
        <button aria-label="Scroll up"><svg viewBox="0 0 8 8"><path d="M1.500 5.500L4 3l2.500 2.500"/></svg></button>
        <i></i>
        <button aria-label="Scroll down"><svg viewBox="0 0 8 8"><path d="M1.500 2.500L4 5l2.500-2.500"/></svg></button>
      </div>
    </div>
    <div class="docsel"><select aria-label="Document"><option>Sample odt large File Download (active)</option></select><svg viewBox="0 0 8 8"><path d="M1.500 3L4 5.500 6.500 3"/></svg></div>
  </div>
  <div class="shade"></div>
</div>
</body>
</html>
```

FILE: styles.css
```css
* { box-sizing: border-box; }
body { margin: 0; font: 8px/11px Roboto, "Open Sans", sans-serif; color: #333; background: #fff; }
button, input, select { font: inherit; color: inherit; margin: 0; padding: 0; border: 0; background: none; border-radius: 0; outline: 0; min-width: 0; }
h2, h3, h4, p, ul { margin: 0; padding: 0; font: inherit; list-style: none; }
i { display: block; }
svg { display: block; flex: none; width: 12px; height: 12px; }
.defs { display: none; }
.cross { width: 7px; height: 7px; fill: none; stroke: #333; }

.app { position: relative; display: flex; flex-direction: column; height: 100vh; overflow: hidden; }
.shade { position: absolute; inset: 0; pointer-events: none; background: linear-gradient(transparent 68%, rgba(0, 0, 0, .25)); }

/* window frame */
.titlebar { height: 27px; flex: none; border-bottom: 1px solid #e8e8e8; }
.wincontrols { display: flex; justify-content: flex-end; gap: 22px; padding: 1px 6px 0 0; }
.win svg { width: 8px; height: 8px; fill: none; stroke: #999; stroke-width: .8; }
.docclose { display: flex; align-items: center; justify-content: space-between; padding-top: 6px; }
.docclose svg { width: 4px; height: 6px; stroke: #333; }
.docclose > svg { width: 2px; }

/* toolbars */
.toolbar { display: flex; align-items: center; height: 19px; flex: none; }
.b { width: 16px; height: 16px; flex: none; display: flex; align-items: center; justify-content: center; }
.on { background: #c9e2f7; }
.bold, .ital, .under { font-family: "Open Sans", sans-serif; font-size: 11px; font-weight: 700; color: #222; }
.ital { font-style: italic; }
.under { text-decoration: underline; color: #24466b; }
.dd { width: 8px; height: 16px; flex: none; display: flex; align-items: center; justify-content: center; }
.dd::after { content: ""; border: 2px solid transparent; border-top-color: #333; border-bottom: 0; }
.faint::after { border-top-color: #bbb; }
.sep { width: 6px; flex: none; display: flex; justify-content: center; }
.sep::after { content: ""; width: 1px; height: 10px; background: #c6c6c6; }
.sep.wide { width: 8px; }
.more { width: 7px; height: 17px; flex: none; display: flex; align-items: flex-end; justify-content: center; padding-bottom: 2px; margin-left: 5px; background: linear-gradient(#ededed, #999); }
.more::after { content: ""; border: 2px solid transparent; border-top-color: #111; border-bottom: 0; }
.more.far { margin-left: 19px; }
.grip { width: 2px; height: 12px; margin: 0 4px 0 3px; border-left: 2px dotted #999; }
.edge { width: 4px; height: 14px; margin: 0 6px 0 3px; border: 1px solid #bbb; border-left: 0; background: #eee; }
.combo { display: flex; height: 14px; border: 1px solid #b5b5b5; background: #fff; }
.combo input { flex: 1; width: 0; padding-left: 2px; }
.combo button { width: 12px; background: #e6e6e6; border: 1px solid #c2c2c2; display: flex; align-items: center; justify-content: center; }
.combo svg, .docsel svg { width: 8px; height: 8px; fill: none; stroke: #666; }
.find { width: 68px; }
.find input::placeholder { color: #777; }

/* work area */
.work { flex: 1; min-height: 0; display: flex; background: #f1f0f2; }
.sliver { width: 3px; flex: none; background: #eee; padding-top: 32px; display: flex; flex-direction: column; align-items: flex-start; gap: 15px; }
.sliver i { width: 1px; height: 7px; background: #f5d75e; }
.sliver .r { background: #d44; }
.sliver .o { background: #e5a52c; margin-top: 20px; }
.editor { flex: 1; min-width: 0; display: flex; flex-direction: column; }
.ruler { height: 18px; flex: none; border-top: 1px solid #777; border-bottom: 1px solid #777; overflow: hidden; }
.ruler svg { width: 512px; height: 16px; }
.nums { font-size: 9px; text-anchor: middle; fill: #444; }
.canvas { flex: 1; min-height: 0; background: #aaa; overflow: hidden; display: flex; flex-direction: column; gap: 10px; }
.page { width: 512px; flex: none; background: #fff; border: 1px solid #666; border-left: 0; padding: 0 64px 0 50px; }
.first { height: 441px; border-top: 0; position: relative; }
.second { flex: 1; border-color: #999; border-bottom: 0; }
.body { height: 381px; border: 1px solid #c6c6c6; border-top: 0; padding: 26px 0 9px; display: flex; flex-direction: column; justify-content: space-between; font: 9px/13px Lato, "Open Sans", sans-serif; }
mark { background: #a8cbf0; color: #294f80; outline: 1px solid #4a80bd; }
.frames { position: absolute; left: 54px; top: 0; width: 42px; padding-left: 6px; height: 8px; line-height: 8px; border-bottom: 1px solid #bbb; border-left: 1px solid #ccc; color: #666; overflow: hidden; }
.vscroll { width: 12px; flex: none; display: flex; flex-direction: column; border-left: 1px solid #ddd; }
.vscroll button, .tscroll button { height: 12px; flex: none; display: flex; align-items: center; justify-content: center; }
.vscroll svg, .tscroll svg { width: 8px; height: 8px; fill: none; stroke: #222; stroke-width: 1.2; }
.vscroll .pg { border: 1px solid #999; height: 10px; }
.pg svg { fill: #222; stroke: none; }
.track { flex: 1; display: flex; flex-direction: column; justify-content: flex-end; padding-bottom: 36px; }
.thumb { height: 31px; background: #cecece; }
.splitter { width: 7px; flex: none; display: flex; align-items: center; border-right: 1px solid #aaa; border-left: 1px solid #e2e2e2; }
.splitter i { width: 2px; height: 22px; margin: 28px 0 0 1px; border-left: 1px dotted #444; }

/* properties deck */
.side { width: 167px; flex: none; margin-top: 3px; border: 1px solid #aaa; border-bottom: 0; }
.phead { display: flex; justify-content: space-between; align-items: center; height: 16px; padding: 0 3px 0 6px; border-bottom: 1px solid #bbb; }
.phead h2, .shead h3 { font-weight: 700; }
.side section { padding: 3px 4px 5px; border-bottom: 1px solid #bbb; }
.side section:last-child { padding: 4px 4px 2px; }
.shead { display: flex; align-items: center; height: 11px; gap: 3px; }
.exp { width: 6px; height: 6px; flex: none; border: 1px solid #888; display: flex; align-items: center; justify-content: center; line-height: 4px; }
.shead h3 { flex: 1; }
.dots { font-size: 6px; }
.row { display: flex; align-items: center; margin-top: 4px; gap: 5px; height: 19px; }
.row:has(.combo) { height: 14px; margin-top: 3px; }
.row.tight { margin-top: 2px; }
.spread { gap: 7px; padding-right: 11px; }
.grp { display: inline-flex; height: 19px; align-items: center; padding: 0 1px; border: 1px solid #d3d3d5; }
.grp .on { height: 17px; }
.end, .push { margin-left: auto; }
.bg { margin-left: 12px; }
.pair { width: 24px; }
.font { width: 115px; }
.size { flex: 1; }
.cols { display: grid; grid-template-columns: 78px 1fr; gap: 5px; margin-top: 2px; }
.cols .row { margin: 0 0 4px; }
.field { display: flex; align-items: center; justify-content: space-between; gap: 4px; height: 19px; }
.field label svg { width: 11px; height: 11px; }
.spin { flex: 1; min-width: 0; display: flex; height: 15px; border: 1px solid #b5b5b5; background: #fff; }
.spin input { flex: 1; width: 0; padding-left: 2px; }
.spin > span { width: 10px; display: flex; flex-direction: column; border-left: 1px solid #c4c4c4; background: #eee; }
.spin button { flex: 1; display: flex; align-items: center; justify-content: center; }
.spin button::after { content: ""; border: 2px solid transparent; border-bottom-color: #222; border-top: 0; }
.spin button + button { border-top: 1px solid #ccc; }
.spin button + button::after { border: 2px solid transparent; border-top-color: #222; border-bottom: 0; }
.tabs { width: 19px; flex: none; display: flex; flex-direction: column; gap: 2px; padding-top: 1px; overflow: hidden; }
.tabs button { height: 20px; flex: none; display: flex; align-items: center; padding-left: 6px; }
.tabs svg { width: 14px; height: 14px; }
.tabs button:first-child { height: 22px; border-bottom: 1px solid #ccc; }
.tabs .sel { background: #dcecf8; border: 1px solid #bcd; padding-left: 3px; margin-left: 2px; }

/* navigator window */
.navigator { position: absolute; left: 370px; top: 205px; width: 258px; background: #f1f0f2; border: 1px solid #aaa; padding: 0 2px 3px; box-shadow: 0 1px 6px rgba(0, 0, 0, .55); }
.nhead { display: flex; justify-content: space-between; align-items: center; height: 17px; margin: 0 -2px; padding-left: 4px; background: #fff; }
.nhead button { width: 13px; height: 11px; background: #c2485a; color: #fff; font-size: 10px; line-height: 10px; }
.ntools { display: flex; align-items: center; height: 17px; }
.nhead + .ntools { padding-top: 2px; height: 19px; }
.pageno { flex: none; width: 33px; margin: 0 6px; }
.treebox { display: flex; height: 228px; margin-top: 2px; border: 1px solid #999; background: #fff; overflow: hidden; }
.tree { flex: 1; }
.tree li { line-height: 11px; }
.tree ul li { padding-left: 27px; }
.node { display: flex; align-items: center; height: 11px; padding-left: 15px; gap: 3px; }
.node .exp { margin: 0 2px 0 -11px; border-color: #aaa; }
.node svg { width: 11px; height: 11px; }
.picked { position: relative; display: inline-block; background: #1266b8; color: #fff; text-decoration: none; outline: 1px dotted #d98; outline-offset: -1px; }
.picked .cursor { position: absolute; left: 22px; top: -1px; width: 10px; height: 14px; }
.tscroll { width: 11px; display: flex; flex-direction: column; background: #f0f0f0; }
.tscroll i { flex: 1; margin-bottom: 18px; background: #cdcdcd; }
.docsel { display: flex; align-items: center; height: 14px; margin-top: 3px; border: 1px solid #999; background: #f4f4f4; }
.docsel select { flex: 1; appearance: none; }
.docsel svg { width: 12px; height: 12px; padding: 2px; border: 1px solid #bbb; background: #e6e6e6; }
```
